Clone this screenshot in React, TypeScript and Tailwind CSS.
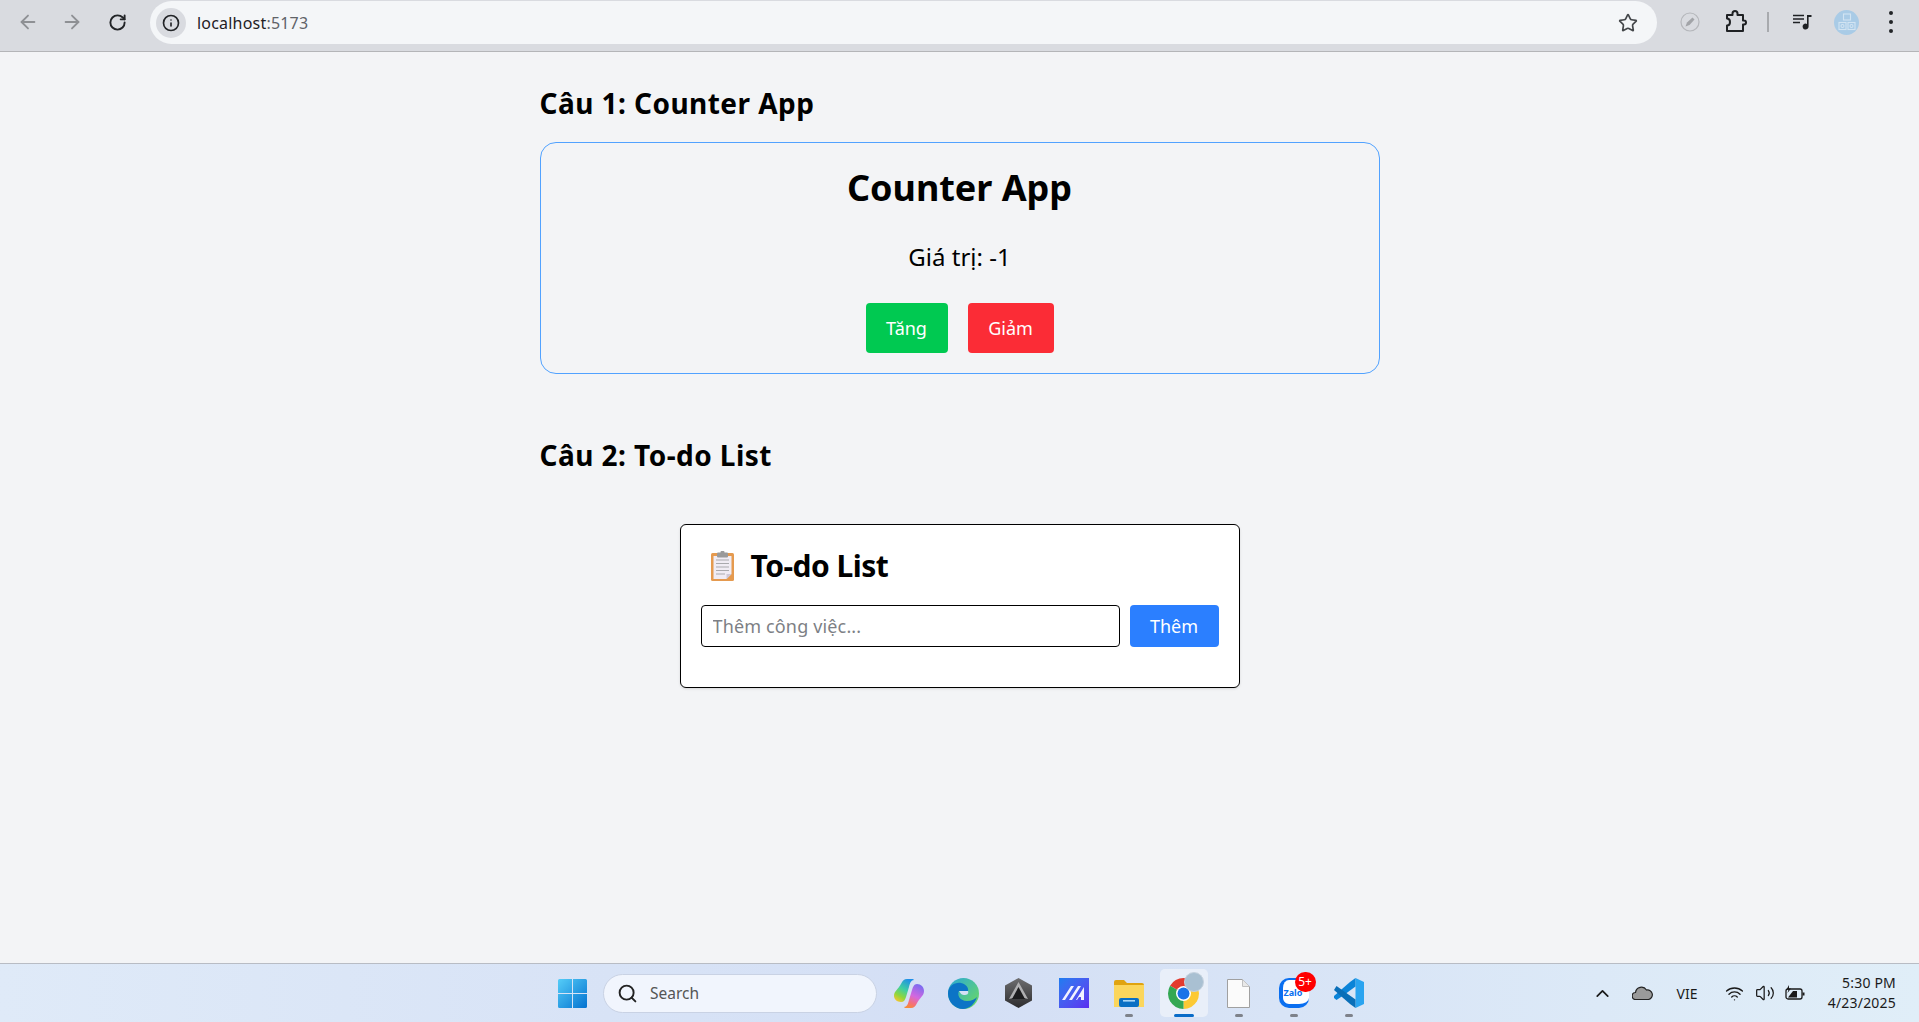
import { ArrowLeft, ArrowRight, ChevronUp, Info, RotateCw, Search, Star, Volume2, Wifi } from "lucide-react"

const font = "font-['Noto_Sans',sans-serif]"

const ChromeBar = () => {
    return <div className="h-[52px] shrink-0 flex items-start bg-[#d9dbe0] border-b border-[#b4b5b8]">
        <div className="w-[150px] h-[44px] flex items-center pl-[17px] gap-[22px] shrink-0">
            <ArrowLeft size={22} strokeWidth={2} className="text-[#8e9094]" />
            <ArrowRight size={22} strokeWidth={2} className="text-[#8e9094]" />
            <RotateCw size={19} strokeWidth={2.4} className="text-[#222427] ml-[3px]" />
        </div>
        <div className="mt-[1px] w-[1507px] h-[43px] rounded-full bg-[#f4f6f8] flex items-center pl-[6px] pr-[19px] shrink-0">
            <div className="w-[30px] h-[30px] rounded-full bg-[#d9dbe0] flex items-center justify-center">
                <Info size={18} strokeWidth={2.2} className="text-[#222427]" />
            </div>
            <p className="ml-[11px] text-[16px] text-[#1f2124] tracking-[0.2px]">localhost<span className="text-[#5f6368]">:5173</span></p>
            <Star size={20} strokeWidth={2} className="ml-auto text-[#44474a]" />
        </div>
        <div className="flex-1 h-[44px] flex items-center">
            <Compass />
            <PuzzleIcon />
            <div className="ml-[20px] w-[2px] h-[20px] bg-[#a8aaae]" />
            <MediaIcon />
            <Avatar />
            <div className="ml-[30px] flex flex-col gap-[5px]">
                <div className="w-[4px] h-[4px] rounded-full bg-[#222427]" />
                <div className="w-[4px] h-[4px] rounded-full bg-[#222427]" />
                <div className="w-[4px] h-[4px] rounded-full bg-[#222427]" />
            </div>
        </div>
    </div>
}

const Compass = () => {
    return <svg width="20" height="20" viewBox="0 0 20 20" className="ml-[23px]">
        <circle cx="10" cy="10" r="9" fill="none" stroke="#b5b7bb" strokeWidth="1.2" />
        <path d="M5.500 14.500 L7 10.500 L12.500 5.500 L14.500 7.500 L9.500 13 Z" fill="#a2a4a8" />
    </svg>
}

const PuzzleIcon = () => {
    return <svg width="22" height="24" viewBox="0 0 22 24" className="ml-[25px]">
        <path d="M2 5h5.500V3.500a2.500 2.500 0 0 1 5 0V5H18v5.500h1a2 2 0 0 1 0 4h-1V21H2v-5.500c2 0 3-1.500 3-3.500s-1-3.500-3-3.500z" fill="none" stroke="#1f2124" strokeWidth="2" strokeLinejoin="round" />
    </svg>
}

const MediaIcon = () => {
    return <svg width="20" height="20" viewBox="0 0 20 20" className="ml-[23px]">
        <path d="M1 3.500h11M1 7h11M1 10.500h7" stroke="#1f2124" strokeWidth="1.700" fill="none" />
        <path d="M15 3h4.500v2H16.600v9.500a3 3 0 1 1-1.600-2.600z" fill="#1f2124" />
    </svg>
}

const Avatar = () => {
    return <div className="ml-[22px] w-[25px] h-[25px] rounded-full bg-[#a9cbe6] flex items-center justify-center">
        <svg width="18" height="19" viewBox="0 0 18 19" fill="none" stroke="#d2e4f2" strokeWidth="1.100">
            <rect x="5.500" y="1" width="7" height="6" />
            <rect x="1" y="9.500" width="7" height="7" />
            <rect x="10" y="9.500" width="7" height="7" />
            <circle cx="4.500" cy="13" r="1.500" />
            <circle cx="13.500" cy="13" r="1.500" />
        </svg>
    </div>
}

const CounterApp = () => {
    return <div className="mt-[23px] h-[232px] border border-[#51a2ff] rounded-2xl pt-[20px] flex flex-col items-center">
        <h1 className="text-[36px] leading-[50px] font-bold text-black tracking-[-0.05px]">Counter App</h1>
        <p className="mt-[30px] text-[24px] leading-[28px] text-black">Giá trị: -1</p>
        <div className="mt-[32px] flex gap-5">
            <button className="w-[82px] h-[50px] rounded bg-[#00c951] text-white text-[18px]">Tăng</button>
            <button className="w-[86px] h-[50px] rounded bg-[#fb2c36] text-white text-[18px]">Giảm</button>
        </div>
    </div>
}

const ClipboardEmoji = () => {
    return <svg width="25" height="30" viewBox="0 0 25 30">
        <rect x="1" y="2" width="23" height="28" rx="1.500" fill="#e59a4f" />
        <path d="M3.500 5h18v18l-5 5H3.500z" fill="#f0ecf4" />
        <path d="M16.500 28l5-5h-5z" fill="#cfc8d6" />
        <path d="M6 9h13M6 12.500h13M6 16h13M6 19.500h13M6 23h9" stroke="#a9a9ad" strokeWidth="1.200" />
        <rect x="7" y="1.500" width="11" height="5" rx="1" fill="#9a9a9a" />
        <rect x="10.500" y="0" width="4" height="3" rx="1" fill="#9a9a9a" />
    </svg>
}

const TodoList = () => {
    return <div className="mt-[53px] mx-auto w-[560px] h-[164px] bg-white border border-black rounded-md shadow-sm px-5">
        <div className="mt-[25px] h-[32px] flex items-center pl-[9px]">
            <ClipboardEmoji />
            <h2 className="ml-[16px] text-[30px] leading-[32px] font-bold text-black tracking-[-0.5px]">To-do List</h2>
        </div>
        <div className="mt-[23px] flex gap-[10px]">
            <input
                placeholder="Thêm công việc..."
                className="w-[419px] h-[42px] border border-black rounded px-[11px] text-[18px] tracking-[0.15px] outline-none placeholder:text-[#7d7f85]"
            />
            <button className="w-[89px] h-[42px] rounded bg-[#2b7fff] text-white text-[18px]">Thêm</button>
        </div>
    </div>
}

const Windows = () => {
    return <svg width="29" height="29" viewBox="0 0 29 29">
        <defs>
            <linearGradient id="win" x1="0" y1="0" x2="1" y2="1">
                <stop offset="0" stopColor="#55cdf8" />
                <stop offset="1" stopColor="#0472d0" />
            </linearGradient>
        </defs>
        <path d="M0 1.500A1.500 1.500 0 0 1 1.500 0H14v14H0zM15 0h12.500A1.500 1.500 0 0 1 29 1.500V14H15zM0 15h14v14H1.500A1.500 1.500 0 0 1 0 27.500zM15 15h14v12.500a1.500 1.500 0 0 1-1.500 1.500H15z" fill="url(#win)" />
    </svg>
}

const Copilot = () => {
    return <svg width="30" height="29" viewBox="0 0 30 29">
        <defs>
            <linearGradient id="cop1" x1="0.700" y1="0" x2="0.200" y2="1">
                <stop offset="0" stopColor="#1f8fe8" />
                <stop offset="0.450" stopColor="#3fd0a0" />
                <stop offset="0.750" stopColor="#8fd63c" />
                <stop offset="1" stopColor="#f7c52e" />
            </linearGradient>
            <linearGradient id="cop2" x1="0.700" y1="0" x2="0.300" y2="1">
                <stop offset="0" stopColor="#7a6cf0" />
                <stop offset="0.500" stopColor="#d368e0" />
                <stop offset="0.800" stopColor="#f4707a" />
                <stop offset="1" stopColor="#f6893a" />
            </linearGradient>
        </defs>
        <path d="M19 0 H13 C10 0 8.500 2 7.500 4 C4 11 0 12 0 17 C0 20 3 23 7 23 C10 23 11 21 12 18 L15 8 C16 4 17 1 20 1 Z" fill="url(#cop1)" />
        <path d="M11 29 H17 C20 29 21.500 27 22.500 25 C26 18 30 17 30 12 C30 8 27 5 23 5 C20 5 19 8 18 11 L15 21 C14 25 13 28 10 28 Z" fill="url(#cop2)" />
    </svg>
}

const Edge = () => {
    return <svg width="31" height="31" viewBox="0 0 31 31">
        <defs>
            <linearGradient id="edge1" x1="0" y1="0" x2="1" y2="1">
                <stop offset="0" stopColor="#2aa8d8" />
                <stop offset="1" stopColor="#6fdc5c" />
            </linearGradient>
        </defs>
        <circle cx="15.500" cy="15.500" r="15.500" fill="url(#edge1)" />
        <path d="M0 15.500C0 8 7 4 13 5c5 1 8 5 7 8h-9c-2 3 0 10 8 10 5 0 8-2 10-4-2 7-8 12-14 12C7 31 0 24 0 15.500Z" fill="#0c74c6" />
        <path d="M11 13h9c1 3-1 4-4 4-2 0-3-1-5-4Z" fill="#d5e0f5" />
    </svg>
}

const HexApp = () => {
    return <svg width="27" height="30" viewBox="0 0 27 30">
        <defs>
            <linearGradient id="hex" x1="0" y1="0" x2="0" y2="1">
                <stop offset="0" stopColor="#6e6e70" />
                <stop offset="1" stopColor="#2c2c2e" />
            </linearGradient>
        </defs>
        <path d="M13.500 0L27 7.500v15L13.500 30 0 22.500v-15z" fill="url(#hex)" />
        <path d="M13.500 4L4 21l9.500-2.500L23 21z" fill="#b0b0b2" />
        <path d="M13.500 9L7 21h13z" fill="#1c1c1e" />
    </svg>
}

const MApp = () => {
    return <div className="w-[30px] h-[30px] bg-gradient-to-br from-[#1a7cf0] to-[#5a2cf0] flex items-center justify-center">
        <svg width="24" height="14" viewBox="0 0 24 14" fill="#f2f2ff">
            <path d="M0 14L9 0h3L3 14zM7 14L16 0h3L10 14zM14 14L22 1v13h-3v-3h-2l-2 3z" />
        </svg>
    </div>
}

const Folder = () => {
    return <svg width="30" height="27" viewBox="0 0 30 27">
        <path d="M0 2a2 2 0 0 1 2-2h8l3 3h15a2 2 0 0 1 2 2v4H0z" fill="#e0a30f" />
        <path d="M0 5h30v22H0z" fill="#fbd65c" />
        <rect x="5" y="18" width="20" height="9" rx="2" fill="#0a6fc4" />
        <rect x="9" y="20" width="12" height="1.600" fill="#a8d5f5" />
    </svg>
}

const ChromeLogo = () => {
    return <div className="relative w-[31px] h-[31px]">
        <svg width="31" height="31" viewBox="0 0 31 31">
            <path d="M15.500 15.500L2.100 7.750A15.500 15.500 0 0 1 28.900 7.750Z" fill="#e33b2e" />
            <path d="M15.500 15.500L28.900 7.750A15.500 15.500 0 0 1 15.500 31Z" fill="#fcc934" />
            <path d="M15.500 15.500L15.500 31A15.500 15.500 0 0 1 2.100 7.750Z" fill="#34a853" />
            <circle cx="15.500" cy="15.500" r="7.500" fill="#fff" />
            <circle cx="15.500" cy="15.500" r="6" fill="#1a73e8" />
        </svg>
        <div className="absolute -top-[6px] left-[16px] w-[20px] h-[20px] rounded-full bg-[#a9c0d2] border border-[#c5d2de]" />
    </div>
}

const FileIcon = () => {
    return <svg width="23" height="29" viewBox="0 0 23 29">
        <path d="M.5.5h15l7 7v21H.5z" fill="#fbfbfb" stroke="#a0a0a0" />
        <path d="M15.500.5v7h7" fill="#e8e8e8" stroke="#c0c0c0" />
    </svg>
}

const Zalo = () => {
    return <div className="relative w-[30px] h-[30px]">
        <div className="w-[30px] h-[30px] rounded-[10px] bg-white border-l-[4px] border-b-[4px] border-t-[2px] border-[#0a6ff0] flex items-center pl-[1px]">
            <span className="text-[9px] leading-none font-bold text-[#0a6ff0]">Zalo</span>
        </div>
        <div className="absolute -top-[6px] left-[16px] w-[21px] h-[20px] rounded-full bg-[#f00] text-white text-[12px] leading-[20px] text-center">5+</div>
    </div>
}

const VsCode = () => {
    return <svg width="30" height="30" viewBox="0 0 30 30">
        <path d="M21.500 0L30 4v22l-8.500 4z" fill="#2aa4f0" />
        <path d="M21.500 0V8.500L8.500 18 2.500 22 0 20V18L16 4z" fill="#0b84d8" />
        <path d="M0 12L2.500 8 21.500 21.500V30L16 26z" fill="#0a6fb8" />
    </svg>
}

const Slot = ({ children, dot, active }: { children: React.ReactNode, dot?: boolean, active?: boolean }) => {
    return <div className="w-[55px] h-[48px] flex justify-center">
        <div className={active ? "relative w-[48px] h-[48px] rounded-[5px] bg-[#e9eff9] flex items-center justify-center" : "relative w-[48px] h-[48px] flex items-center justify-center"}>
            {children}
            {dot && <div className="absolute bottom-0 left-[20px] w-[8px] h-[3px] rounded-full bg-[#7e828a]" />}
            {active && <div className="absolute bottom-0 left-[14px] w-[20px] h-[3px] rounded-full bg-[#0a6cc8]" />}
        </div>
    </div>
}

const Taskbar = () => {
    return <div className="h-[59px] shrink-0 border-t border-[#b8bcc4] bg-gradient-to-r from-[#dfeaf8] via-[#d4dff5] to-[#e0eef8] flex items-center">
        <div className="ml-[545px] w-[55px] flex justify-center"><Windows /></div>
        <div className="ml-[3px] w-[274px] h-[39px] rounded-full bg-[#f1f5fd] border border-[#c9d2e4] flex items-center pl-[13px]">
            <Search size={21} strokeWidth={2.2} className="text-[#222]" />
            <span className="ml-[12px] mt-[1px] text-[15.5px] text-[#555]">Search</span>
        </div>
        <div className="ml-[4px] flex">
            <Slot><Copilot /></Slot>
            <Slot><Edge /></Slot>
            <Slot><HexApp /></Slot>
            <Slot><MApp /></Slot>
            <Slot dot><Folder /></Slot>
            <Slot active><ChromeLogo /></Slot>
            <Slot dot><FileIcon /></Slot>
            <Slot dot><Zalo /></Slot>
            <Slot dot><VsCode /></Slot>
        </div>
        <div className="ml-auto flex items-center pr-[23px] text-[#1a1a1a]">
            <ChevronUp size={21} strokeWidth={2} />
            <svg width="21" height="14" viewBox="0 0 21 14" className="ml-[19px]">
                <path d="M4 13.500a3.500 3.500 0 0 1-.5-7A6 6 0 0 1 14.500 4 4.500 4.500 0 0 1 16.500 13.500Z" fill="#9a9a9a" stroke="#222" strokeWidth="1.200" />
            </svg>
            <span className="ml-[21px] w-[26px] text-[14px] text-center">VIE</span>
            <Wifi size={19} strokeWidth={1.7} className="ml-[25px]" />
            <Volume2 size={20} strokeWidth={1.5} className="ml-[11px]" />
            <svg width="20" height="16" viewBox="0 0 20 16" className="ml-[10px]">
                <rect x="1" y="4" width="16" height="10" rx="2" fill="none" stroke="#1a1a1a" strokeWidth="1.300" />
                <rect x="17.500" y="7.500" width="2" height="3" fill="#1a1a1a" />
                <path d="M3 12.500L8 6h4v6.500z" fill="#1a1a1a" />
                <path d="M4 0L1.500 4.500h2L2.500 8 6 3.500H4z" fill="#1a1a1a" />
            </svg>
            <div className="ml-[11px] w-[80px] flex flex-col items-end text-[14px] leading-[20px] tracking-[0.2px] text-[#1a1a1a]">
                <span>5:30 PM</span>
                <span>4/23/2025</span>
            </div>
        </div>
    </div>
}

const App = () => {
    return <div className={`h-screen flex flex-col bg-[#f3f4f6] overflow-hidden ${font}`}>
        <ChromeBar />
        <div className="flex-1">
            <div className="mx-auto w-[840px] pt-[35px]">
                <h2 className="text-[28px] leading-[32px] font-bold text-black tracking-[0.45px]">Câu 1: Counter App</h2>
                <CounterApp />
                <h2 className="mt-[65px] text-[28px] leading-[32px] font-bold text-black tracking-[0.45px]">Câu 2: To-do List</h2>
                <TodoList />
            </div>
        </div>
        <Taskbar />
    </div>
}

export default App
